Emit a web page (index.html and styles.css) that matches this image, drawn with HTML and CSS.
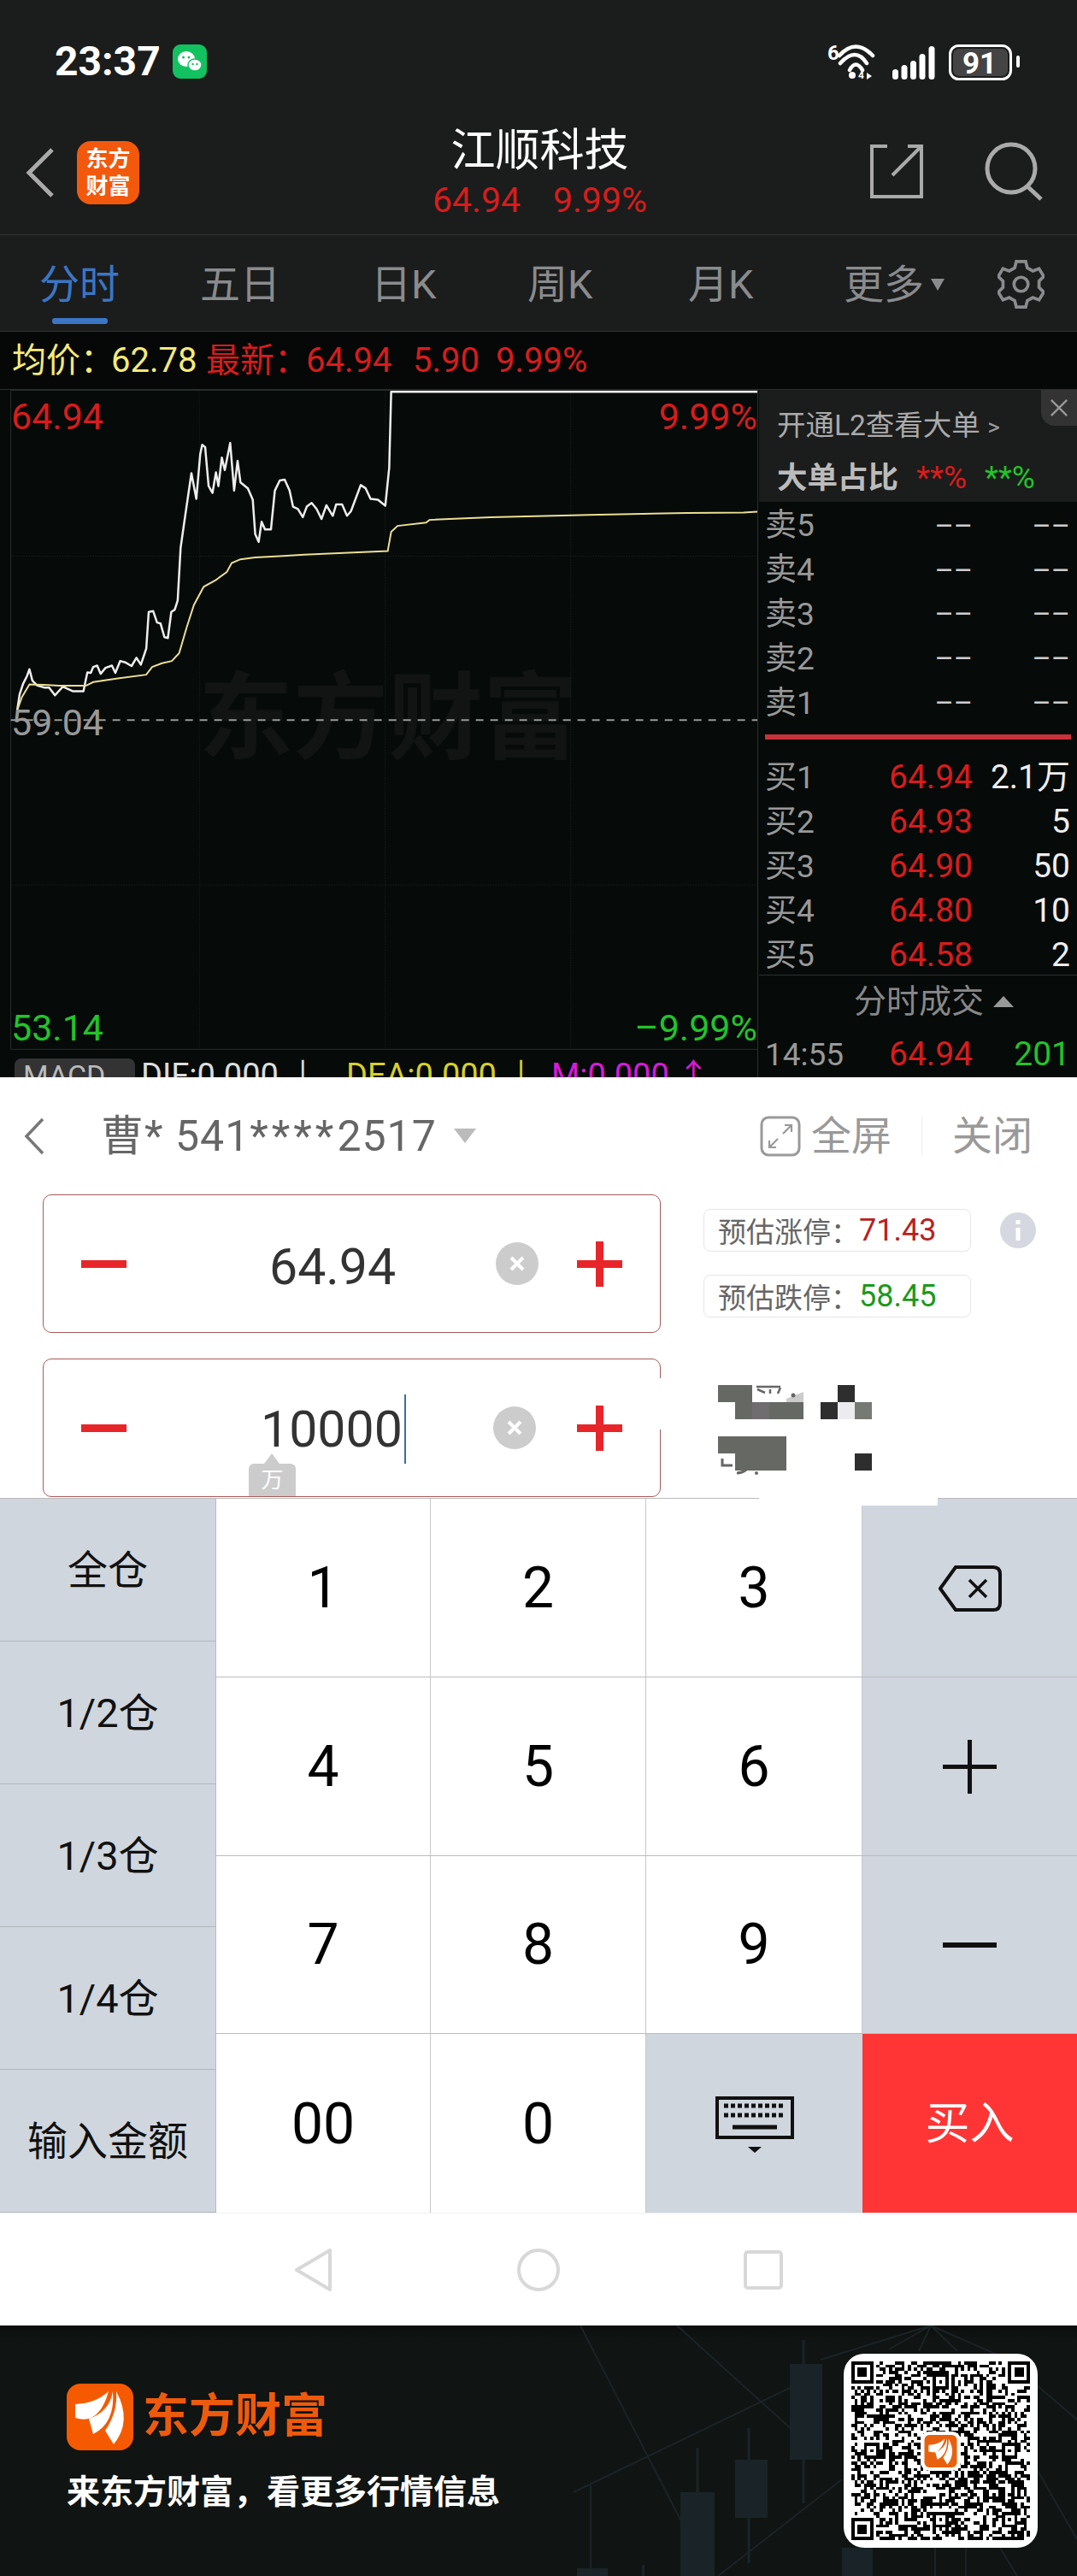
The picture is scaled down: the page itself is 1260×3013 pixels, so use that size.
FILE: index.html
```html
<!DOCTYPE html>
<html lang="zh">
  <head>
    <meta charset="UTF-8">
    <title>江顺科技</title>
    <link rel="stylesheet" href="styles.css">
  </head>
  <body>
    <!-- Status bar and stock title -->
    <header class="top">
      <div class="status">
        <span class="time">23:37</span>
        <svg class="wechat" viewBox="0 0 40 40">
          <rect width="40" height="40" rx="9" fill="#12c15f"/>
          <ellipse cx="16" cy="17" rx="10" ry="9" fill="#fff"/>
          <ellipse cx="26" cy="24" rx="8" ry="7" fill="#fff" stroke="#12c15f" stroke-width="1.5"/>
          <circle cx="12.5" cy="15" r="1.5" fill="#12c15f"/>
          <circle cx="19" cy="15" r="1.5" fill="#12c15f"/>
          <circle cx="23.500" cy="23" r="1.200" fill="#12c15f"/>
          <circle cx="28.500" cy="23" r="1.200" fill="#12c15f"/>
        </svg>
        <div class="status-right">
          <svg class="wifi" viewBox="0 0 56 40" fill="none" stroke="#fff" stroke-width="4.500" stroke-linecap="round">
            <text x="0" y="17" class="wifi-six">6</text>
            <path d="M14 12Q33 -9 53 12M15 21Q33 1 46 21M26 29Q33 16 41 29"/>
            <circle cx="29" cy="35" r="4" fill="#fff" stroke="none"/>
            <text x="36" y="39" class="wifi-four">4</text>
            <path d="M46 32L52 36L46 40Z" fill="#fff" stroke="none"/>
          </svg>
          <svg class="signal" viewBox="0 0 50 39" fill="#fff">
            <rect x="0" y="27" width="7" height="12" rx="3.500"/>
            <rect x="10.500" y="22" width="7" height="17" rx="3.500"/>
            <rect x="21" y="17" width="7" height="22" rx="3.500"/>
            <rect x="31.500" y="9" width="7" height="30" rx="3.500"/>
            <rect x="42.500" y="0" width="7" height="39" rx="3.500"/>
          </svg>
          <svg class="battery" viewBox="0 0 83 42">
            <rect x="1.500" y="1.500" width="71" height="39" rx="10" fill="none" stroke="#fff" stroke-width="3"/>
            <rect x="5" y="5" width="64" height="32" rx="7" fill="#444"/>
            <rect x="79" y="13" width="4" height="14" rx="2" fill="#fff"/>
            <text x="36" y="34" text-anchor="middle" class="battery-text">91</text>
          </svg>
        </div>
      </div>
      <div class="nav">
        <div class="nav-left">
          <svg class="back" viewBox="0 0 33 58" fill="none" stroke="#aaa" stroke-width="5">
            <path d="M31 2L4 29L31 56"/>
          </svg>
          <div class="app-badge">东方<br>财富</div>
        </div>
        <div class="nav-title">
          <div class="stock-name">江顺科技</div>
          <div class="stock-sub"><span>64.94</span><span>9.99%</span></div>
        </div>
        <div class="nav-right">
          <svg class="share" viewBox="0 0 62 63" fill="none" stroke="#aaa" stroke-width="4">
            <path d="M20 2H2V61H60V2H44M26 36L59 3"/>
          </svg>
          <svg class="search" viewBox="0 0 70 70" fill="none" stroke="#aaa" stroke-width="5">
            <circle cx="31" cy="32" r="28"/>
            <path d="M50 53L66 68"/>
          </svg>
        </div>
      </div>
    </header>

    <nav class="tabs">
      <div class="tab active">分时<i class="tab-line"></i></div>
      <div class="tab">五日</div>
      <div class="tab">日K</div>
      <div class="tab">周K</div>
      <div class="tab">月K</div>
      <div class="tab">更多<i class="tab-arrow"></i></div>
      <svg class="gear" viewBox="-2 0 60 62" fill="none" stroke="#8a8b8d" stroke-width="4">
        <path d="M22 2h12l2 8 7 4 8-3 6 10-6 6v8l6 6-6 10-8-3-7 4-2 8H22l-2-8-7-4-8 3-6-10 6-6v-8l-6-6 6-10 8 3 7-4z"/>
        <circle cx="28" cy="31" r="9"/>
      </svg>
    </nav>

    <div class="quote">
      <span class="yellow">均价：</span>
      <span class="yellow">62.78</span>
      <span class="red">最新：</span>
      <span class="red">64.94</span>
      <span class="red">5.90</span>
      <span class="red">9.99%</span>
    </div>

    <!-- Intraday chart and order book -->
    <section class="market">
      <div class="chart">
        <div class="watermark">东方财富</div>
        <svg class="chart-lines" viewBox="0 30 1543 1501" preserveAspectRatio="none" fill="none">
          <g class="grid-lines">
            <path d="M22 31H1543M22 1470H1543M22 31V1470"/>
            <path class="dotted" d="M22 393H1543M22 1111H1543M407 31V1470M785 31V1470M1163 31V1470"/>
          </g>
          <path class="base-line" d="M22 751H1543"/>
          <path class="price-line" d="M35 730 40 695 47 672 55 655 60 640 66 665 75 675 90 680 100 680 112 697 128 678 148 688 170 688 178 647 185 648 190 635 198 632 205 650 215 637 228 632 235 648 245 622 255 625 268 633 278 615 287 630 298 595 303 515 312 513 320 538 327 540 335 570 342 572 349 515 356 510 362 490 368 375 378 300 390 212 400 268 408 170 412 150 418 155 425 240 433 255 440 210 445 240 452 178 458 205 469 146 477 250 484 185 490 232 505 245 515 270 520 345 527 362 533 318 540 335 552 335 560 250 570 228 580 226 590 250 597 285 607 290 617 308 625 285 635 277 645 290 655 312 665 282 678 305 685 280 697 280 707 305 715 295 735 238 745 245 755 268 770 270 785 283 793 200 797 34 1543 34"/>
          <path class="avg-line" d="M35 730 45 700 60 673 90 674 120 676 175 676 190 668 240 660 298 652 310 635 330 627 350 622 365 605 380 550 395 500 415 460 440 445 462 428 472 408 490 400 520 396 570 393 620 390 720 385 790 382 797 340 810 327 868 320 875 314 1000 308 1200 303 1400 299 1515 298 1543 296"/>
        </svg>
        <span class="chart-label red label-top">64.94</span>
        <span class="chart-label red label-top label-right">9.99%</span>
        <span class="chart-label grey label-mid">59.04</span>
        <span class="chart-label green label-low">53.14</span>
        <span class="chart-label green label-low label-right">–9.99%</span>
        <div class="macd">
          <span class="macd-chip">MACD</span>
          <span class="macd-dif">DIF:0.000 ↓</span>
          <span class="macd-dea">DEA:0.000 ↓</span>
          <span class="macd-m">M:0.000 ↑</span>
        </div>
      </div>

      <aside class="book">
        <div class="book-head">
          <div class="book-close">
            <svg viewBox="0 0 24 24" fill="none" stroke="#999" stroke-width="2.500"><path d="M2 2L22 22M22 2L2 22"/></svg>
          </div>
          <div class="book-l2">开通L2查看大单 <span class="book-more">&gt;</span></div>
          <div class="book-ratio"><b>大单占比</b><span class="red">**%</span><span class="green">**%</span></div>
        </div>
        <div class="book-rows">
          <div class="row"><span class="row-label">卖5</span><span class="dash">––</span><span class="dash">––</span></div>
          <div class="row"><span class="row-label">卖4</span><span class="dash">––</span><span class="dash">––</span></div>
          <div class="row"><span class="row-label">卖3</span><span class="dash">––</span><span class="dash">––</span></div>
          <div class="row"><span class="row-label">卖2</span><span class="dash">––</span><span class="dash">––</span></div>
          <div class="row"><span class="row-label">卖1</span><span class="dash">––</span><span class="dash">––</span></div>
        </div>
        <div class="book-sep"></div>
        <div class="book-rows">
          <div class="row"><span class="row-label">买1</span><span class="red">64.94</span><span class="vol">2.1万</span></div>
          <div class="row"><span class="row-label">买2</span><span class="red">64.93</span><span class="vol">5</span></div>
          <div class="row"><span class="row-label">买3</span><span class="red">64.90</span><span class="vol">50</span></div>
          <div class="row"><span class="row-label">买4</span><span class="red">64.80</span><span class="vol">10</span></div>
          <div class="row"><span class="row-label">买5</span><span class="red">64.58</span><span class="vol">2</span></div>
        </div>
        <div class="book-ticks">分时成交<i class="ticks-arrow"></i></div>
        <div class="row tick-row"><span class="row-label">14:55</span><span class="red">64.94</span><span class="green">201</span></div>
      </aside>
    </section>

    <!-- Order panel -->
    <section class="trade">
      <div class="trade-head">
        <svg class="trade-back" viewBox="0 0 24 44" fill="none" stroke="#777" stroke-width="3.500">
          <path d="M22 2L3 22L22 42"/>
        </svg>
        <span class="account">曹* 541<span class="stars">****</span>2517</span>
        <i class="account-arrow"></i>
        <div class="trade-actions">
          <svg class="fullscreen" viewBox="0 0 48 48" fill="none" stroke="#999" stroke-width="3">
            <rect x="2" y="2" width="44" height="44" rx="8"/>
            <path d="M27 21L36 12M29 11H37V19M21 27L12 36M11 29V37H19" stroke-width="2.200"/>
          </svg>
          <span class="action">全屏</span>
          <i class="action-line"></i>
          <span class="action">关闭</span>
        </div>
      </div>

      <div class="form">
        <div class="inputs">
          <div class="stepper">
            <svg class="step-btn" viewBox="0 0 53 53"><rect y="22" width="53" height="9" fill="#e8262a"/></svg>
            <span class="step-value">64.94</span>
            <svg class="clear" viewBox="0 0 50 50">
              <circle cx="25" cy="25" r="25" fill="#ccc"/>
              <path d="M18 18L32 32M32 18L18 32" stroke="#fff" stroke-width="4"/>
            </svg>
            <svg class="step-btn" viewBox="0 0 53 53"><path d="M0 22H53V31H0ZM22 0H31V53H22Z" fill="#e8262a"/></svg>
          </div>
          <div class="stepper stepper-qty">
            <svg class="step-btn" viewBox="0 0 53 53"><rect y="22" width="53" height="9" fill="#e8262a"/></svg>
            <span class="step-value">10000<i class="cursor"></i></span>
            <svg class="clear" viewBox="0 0 50 50">
              <circle cx="25" cy="25" r="25" fill="#ccc"/>
              <path d="M18 18L32 32M32 18L18 32" stroke="#fff" stroke-width="4"/>
            </svg>
            <svg class="step-btn" viewBox="0 0 53 53"><path d="M0 22H53V31H0ZM22 0H31V53H22Z" fill="#e8262a"/></svg>
            <span class="unit-tag">万</span>
          </div>
        </div>
        <div class="limits">
          <div class="limit-row">
            <div class="chip">预估涨停：<span class="chip-up">71.43</span></div>
            <svg class="info" viewBox="0 0 42 42">
              <circle cx="21" cy="21" r="21" fill="#d5d8e0"/>
              <path d="M18.500 18H23.500V33H18.500ZM18.500 9H23.500V14H18.500Z" fill="#fff"/>
            </svg>
          </div>
          <div class="chip">预估跌停：<span class="chip-down">58.45</span></div>
          <!-- pixelated part of the screenshot -->
          <div class="mosaic">
            <i class="px-a"></i><i class="px-b"></i><i class="px-c"></i><i class="px-d"></i>
            <i class="px-e"></i><i class="px-f"></i><i class="px-g"></i><i class="px-h"></i>
            <i class="px-i"></i><i class="px-j"></i><i class="px-k"></i>
            <svg class="px-top" viewBox="0 0 60 20" fill="none" stroke="#666" stroke-width="2.500">
              <path d="M5 2H33M6 5L15 9M21 5V10M33 3L30 10"/>
              <path d="M40 16L60 8V20H40Z" fill="#ccc" stroke="none"/>
              <circle cx="48" cy="12" r="2.500" fill="#666" stroke="none"/>
            </svg>
            <svg class="px-low" viewBox="0 0 60 40" fill="none" stroke="#666" stroke-width="3">
              <path d="M5 6V14H17M36 12Q35 22 22 23"/>
              <circle cx="45" cy="23" r="2" fill="#666" stroke="none"/>
            </svg>
          </div>
        </div>
      </div>

      <div class="keyboard">
        <div class="kb-patch"></div>
        <div class="kb-side">
          <div class="kb-side-key">全仓</div>
          <div class="kb-side-key">1/2仓</div>
          <div class="kb-side-key">1/3仓</div>
          <div class="kb-side-key">1/4仓</div>
          <div class="kb-side-key">输入金额</div>
        </div>
        <div class="kb-main">
          <div class="key">1</div>
          <div class="key">2</div>
          <div class="key">3</div>
          <div class="key key-grey">
            <svg class="kb-del" viewBox="0 0 74 54" fill="none" stroke="#111" stroke-width="4">
              <path d="M20 2H64Q72 2 72 10V44Q72 52 64 52H20L2 27Z"/>
              <path d="M36 17L56 37M56 17L36 37" stroke-width="3.500"/>
            </svg>
          </div>
          <div class="key">4</div>
          <div class="key">5</div>
          <div class="key">6</div>
          <div class="key key-grey">
            <svg class="kb-sign" viewBox="0 0 63 63"><path d="M0 29H63V34H0ZM29 0H34V63H29Z" fill="#111"/></svg>
          </div>
          <div class="key">7</div>
          <div class="key">8</div>
          <div class="key">9</div>
          <div class="key key-grey">
            <svg class="kb-sign" viewBox="0 0 63 63"><rect y="28" width="63" height="6" fill="#111"/></svg>
          </div>
          <div class="key key-end">00</div>
          <div class="key key-end">0</div>
          <div class="key key-grey key-end">
            <svg class="kb-board" viewBox="0 0 92 66">
              <rect x="2" y="2" width="88" height="46" fill="none" stroke="#111" stroke-width="4"/>
              <path d="M10 11h72M10 22h72" stroke="#111" stroke-width="5" stroke-dasharray="5 3"/>
              <path d="M20 36H72" stroke="#111" stroke-width="5"/>
              <path d="M38 59H54L46 66Z" fill="#111"/>
            </svg>
          </div>
          <div class="key key-buy key-end">买入</div>
        </div>
      </div>
    </section>

    <!-- Android buttons -->
    <div class="sysbar">
      <svg class="sys-back" viewBox="0 0 43 50" fill="none" stroke="#d8d8d8" stroke-width="4">
        <path d="M41 2V48L2 25Z" stroke-linejoin="round"/>
      </svg>
      <svg class="sys-home" viewBox="0 0 50 50" fill="none" stroke="#d8d8d8" stroke-width="4">
        <circle cx="25" cy="25" r="23"/>
      </svg>
      <svg class="sys-recent" viewBox="0 0 46 46" fill="none" stroke="#d8d8d8" stroke-width="4">
        <rect x="2" y="2" width="42" height="42" rx="3"/>
      </svg>
    </div>

    <!-- Share footer -->
    <footer class="footer">
      <svg class="footer-bg" viewBox="0 0 1260 293" fill="none">
        <g stroke="#1c2326" stroke-width="2">
          <path d="M679 0L830 293M792 0L930 125M924 73L671 195M1089 0L960 40M1089 0L1040 28M1089 0L1075 30M1089 0L1120 30M1089 0L1180 40M1214 170L1260 250M985 180L840 293M1213 70L1260 110M1094 260V293M1130 260V293M1170 260L1190 293"/>
        </g>
        <g fill="#1a2428">
          <path d="M938.500 17H941.500V208H938.500ZM924 45H962V157H924Z"/>
          <path d="M874.500 120H877.500V278H874.500ZM860 157H898V225H860Z"/>
          <path d="M814.500 143H817.500V293H814.500ZM796 195H836V293H796Z"/>
          <path d="M985 260H1021V293H985Z"/>
          <path d="M690 187H692V293H690ZM675 284H711V293H675ZM751 280H754V293H751Z"/>
        </g>
      </svg>
      <div class="footer-left">
        <div class="brand">
          <svg class="brand-logo" viewBox="0 0 78 78">
            <rect width="78" height="78" rx="16" fill="#f55a00"/>
            <path d="M49 9Q34 23 10 24L10 40Q38 49 49 9Z" fill="#fff"/>
            <path d="M54 9Q50 33 26 41L31 59Q57 46 54 9Z" fill="#fff"/>
            <path d="M58 9Q60 33 45 55L55 71Q77 44 58 9Z" fill="#fff"/>
          </svg>
          <span class="brand-name">东方财富</span>
        </div>
        <div class="slogan">来东方财富，看更多行情信息</div>
      </div>
      <div class="qr">
        <svg id="qrCode" class="qr-code" viewBox="0 0 57 57" shape-rendering="crispEdges">
          <path id="qrPath" fill="#000"></path>
        </svg>
        <div class="qr-logo">
          <svg viewBox="0 0 78 78">
            <rect width="78" height="78" rx="12" fill="#e8610f"/>
            <path d="M49 9Q34 23 10 24L10 40Q38 49 49 9Z" fill="#fff"/>
            <path d="M54 9Q50 33 26 41L31 59Q57 46 54 9Z" fill="#fff"/>
            <path d="M58 9Q60 33 45 55L55 71Q77 44 58 9Z" fill="#fff"/>
          </svg>
        </div>
      </div>
    </footer>
    <script src="script.js"></script>
  </body>
</html>
```
FILE: styles.css
```css
* {
  box-sizing: border-box;
}

body {
  margin: 0;
  width: 1260px;
  height: 3013px;
  overflow: hidden;
  background-color: #fff;
  font-family: Roboto, "Noto Sans CJK SC", sans-serif;
  color: #111;
}

i {
  display: block;
  font-style: normal;
}

.red {
  color: #d81c1c;
}

.green {
  color: #22c32a;
}

.yellow {
  color: #f5ea7a;
}

.grey {
  color: #999;
}

/* Top bar */
.top {
  height: 275px;
  background-color: #1b1c1c;
  border-bottom: 1px solid #333;
}

.status {
  height: 130px;
  padding: 52px 67px 0 64px;
  display: flex;
  align-items: flex-start;
}

.time {
  font-size: 48px;
  font-weight: 700;
  line-height: 40px;
  color: #fff;
}

.wechat {
  width: 40px;
  height: 40px;
  margin-left: 14px;
}

.status-right {
  margin-left: auto;
  display: flex;
  align-items: center;
  gap: 20px;
}

.wifi {
  width: 56px;
  height: 40px;
  overflow: visible;
}

.wifi-six {
  font-size: 24px;
  font-weight: 700;
  fill: #fff;
  stroke: none;
}

.wifi-four {
  font-size: 12px;
  font-weight: 700;
  fill: #fff;
  stroke: none;
}

.signal {
  width: 50px;
  height: 39px;
}

.battery {
  width: 83px;
  height: 42px;
  margin-left: -4px;
}

.battery-text {
  font-size: 35px;
  font-weight: 700;
  fill: #fff;
}

.nav {
  height: 144px;
  padding: 0 38px;
  display: grid;
  grid-template-columns: 1fr auto 1fr;
}

.nav-left {
  display: flex;
  align-items: center;
  gap: 27px;
  margin-left: -8px;
  padding-bottom: 1px;
}

.back {
  width: 33px;
  height: 58px;
}

.app-badge {
  width: 73px;
  height: 74px;
  border-radius: 16px;
  background-color: #f2590d;
  color: #fff;
  font-size: 26px;
  font-weight: 700;
  line-height: 32px;
  text-align: center;
  padding-top: 5px;
}

.nav-title {
  margin-left: 3px;
}

.stock-name {
  margin-top: 20px;
  font-size: 52px;
  line-height: 54px;
  color: #fff;
  text-align: center;
}

.stock-sub {
  margin-top: 7px;
  font-size: 41px;
  line-height: 46px;
  color: #d81c1c;
  display: flex;
  gap: 38px;
  justify-content: center;
}

.nav-right {
  display: flex;
  align-items: center;
  justify-content: flex-end;
  gap: 72px;
  padding-bottom: 4px;
}

.share {
  width: 62px;
  height: 63px;
}

.search {
  width: 70px;
  height: 70px;
}

/* Period tabs */
.tabs {
  height: 113px;
  background-color: #1b1c1c;
  border-bottom: 1px solid #333;
  padding: 32px 38px 0 46px;
  display: grid;
  grid-template-columns: 188px 200px 183px 188px 182px 1fr auto;
  align-items: start;
  position: relative;
}

.tab {
  font-size: 47px;
  line-height: 52px;
  color: #8a8b8d;
  display: flex;
  align-items: center;
}

.tab.active {
  color: #3a76c4;
}

.tab-line {
  position: absolute;
  left: 61px;
  top: 97px;
  width: 65px;
  height: 7px;
  border-radius: 3px;
  background-color: #3a76c4;
}

.tab-arrow {
  margin-left: 8px;
  width: 0;
  height: 0;
  border-left: 8px solid transparent;
  border-right: 8px solid transparent;
  border-top: 14px solid #8a8b8d;
}

.gear {
  width: 55px;
  height: 57px;
  margin-top: -3px;
}

/* Quote line */
.quote {
  height: 68px;
  padding-left: 14px;
  background-color: #060807;
  display: grid;
  grid-template-columns: 116px 111px 117px 125px 97px auto;
  align-items: center;
  font-size: 40px;
  line-height: 1;
  justify-content: start;
  white-space: nowrap;
  border-bottom: 1px solid #2a2e2d;
}

/* Chart and order book */
.market {
  height: 804px;
  display: flex;
  background-color: #060a08;
  overflow: hidden;
}

.chart {
  width: 886px;
  height: 804px;
  position: relative;
}

.chart-lines {
  position: relative;
  display: block;
  width: 886px;
  height: 804px;
}

.chart-lines path {
  vector-effect: non-scaling-stroke;
}

.grid-lines {
  stroke: #2a2e2d;
  stroke-width: 1;
}

.dotted {
  stroke: #252a28;
  stroke-dasharray: 1 2;
}

.base-line {
  stroke: #999;
  stroke-width: 2;
  stroke-dasharray: 9 8;
}

.price-line {
  stroke: #eee;
  stroke-width: 2.5;
  stroke-linejoin: round;
}

.avg-line {
  stroke: #ecdf94;
  stroke-width: 2;
}

.watermark {
  position: absolute;
  left: 232px;
  top: 320px;
  font-size: 111px;
  line-height: 130px;
  font-weight: 700;
  color: #111413;
}

.chart-label {
  position: absolute;
  left: 13px;
  font-size: 43px;
  line-height: 44px;
}

.label-right {
  left: auto;
  right: 0;
}

.label-top {
  top: 9px;
}

.label-mid {
  top: 367px;
}

.label-low {
  top: 724px;
}

.macd {
  position: absolute;
  left: 17px;
  right: 0;
  top: 782px;
  height: 22px;
  overflow: hidden;
  display: flex;
  font-size: 38px;
  line-height: 40px;
}

.macd-chip {
  width: 141px;
  height: 40px;
  background-color: #333;
  color: #bbb;
  border-radius: 8px;
  padding-left: 10px;
  font-size: 34px;
}

.macd-dif {
  margin-left: 7px;
  width: 240px;
  color: #ddd;
}

.macd-dea {
  width: 240px;
  color: #d8cf2a;
}

.macd-m {
  color: #d81ad8;
}

.book {
  width: 374px;
  padding-left: 1px;
  font-size: 39px;
  border-left: 1px solid #2a2e2d;
}

.book-head {
  height: 131px;
  background-color: #1b1c1c;
  padding: 20px 0 0 21px;
  position: relative;
  color: #aaa;
}

.book-close {
  position: absolute;
  right: 0;
  top: 0;
  width: 42px;
  height: 42px;
  background-color: #333;
  border-bottom-left-radius: 16px;
  display: flex;
  align-items: center;
  justify-content: center;
}

.book-close svg {
  width: 24px;
  height: 22px;
}

.book-l2 {
  font-size: 33.500px;
  line-height: 44px;
  white-space: nowrap;
}

.book-more {
  font-size: 28px;
  color: #999;
}

.book-ratio {
  margin-top: 15px;
  display: flex;
  align-items: center;
  font-size: 37px;
  line-height: 44px;
  gap: 21px;
}

.book-ratio b {
  font-size: 35.500px;
  color: #bbb;
}

.book-rows {
  padding-top: 1px;
  padding-bottom: 1px;
}

.book-rows .row:first-child {
  margin-top: 1px;
}

.row {
  height: 51.800px;
  padding: 0 7px;
  display: grid;
  grid-template-columns: 126px 117px 114px;
  align-items: center;
  line-height: 1;
}

.row span:not(:first-child) {
  text-align: right;
}

.row-label {
  font-size: 37px;
  color: #999;
  white-space: nowrap;
}

.dash {
  font-size: 34px;
  color: #ccc;
}

.vol {
  color: #eee;
}

.book-sep {
  height: 6px;
  margin: 10px 7px 17px 7px;
  background-color: #c8323a;
}

.book-ticks {
  height: 62px;
  margin-top: -4px;
  border-top: 1px solid #2a2e2d;
  font-size: 38px;
  line-height: 1;
  color: #888;
  display: flex;
  align-items: center;
  padding-left: 111px;
  gap: 11px;
}

.ticks-arrow {
  width: 0;
  height: 0;
  border-left: 12px solid transparent;
  border-right: 12px solid transparent;
  border-bottom: 13px solid #999;
}

.tick-row {
  margin-top: 6px;
}

/* Order panel */
.trade {
  background-color: #fff;
}

.trade-head {
  height: 137px;
  padding: 0 52px 0 28px;
  display: flex;
  align-items: center;
}

.trade-back {
  width: 24px;
  height: 44px;
  margin-right: 66px;
}

.account {
  font-size: 50px;
  letter-spacing: 1px;
  color: #666;
  line-height: 1;
}

.stars {
  letter-spacing: 4px;
}

.account-arrow {
  width: 0;
  height: 0;
  margin-left: 20px;
  border-left: 13px solid transparent;
  border-right: 13px solid transparent;
  border-top: 17px solid #bbb;
}

.trade-actions {
  margin-left: auto;
  display: flex;
  align-items: center;
}

.fullscreen {
  width: 48px;
  height: 48px;
  margin-right: 12px;
}

.action {
  font-size: 47px;
  line-height: 1;
  color: #999;
}

.action-line {
  width: 1px;
  height: 46px;
  margin: 0 35px;
  background-color: #eee;
}

.form {
  height: 355px;
  padding-left: 50px;
  display: flex;
}

.inputs {
  width: 723px;
  display: flex;
  flex-direction: column;
  gap: 30px;
}

.stepper {
  height: 162px;
  border: 1px solid #a85a5a;
  border-radius: 10px;
  padding: 0 44px;
  display: flex;
  align-items: center;
  position: relative;
}

.stepper-qty::after {
  content: "";
  position: absolute;
  right: -2px;
  top: 22px;
  width: 4px;
  height: 60px;
  background-color: #fff;
}

.step-btn {
  width: 53px;
  height: 53px;
  flex: none;
}

.step-value {
  flex: 1;
  padding-left: 167px;
  font-size: 59px;
  line-height: 1;
  color: #333;
  display: flex;
  align-items: center;
  padding-top: 6px;
}

.stepper-qty .step-value {
  padding-left: 157px;
  padding-top: 2px;
}

.cursor {
  width: 2px;
  height: 81px;
  margin-left: 2px;
  background-color: #3a6f9a;
}

.clear {
  width: 50px;
  height: 50px;
  margin-right: 45px;
  flex: none;
}

.stepper-qty .clear {
  margin-right: 48px;
}

.unit-tag {
  position: absolute;
  left: 240px;
  bottom: 0;
  width: 55px;
  height: 38px;
  background-color: #ccc;
  border-radius: 6px 6px 0 0;
  color: #fff;
  font-size: 26px;
  line-height: 38px;
  text-align: center;
}

.unit-tag::before {
  content: "";
  position: absolute;
  left: 18px;
  top: -12px;
  border-left: 9px solid transparent;
  border-right: 9px solid transparent;
  border-bottom: 12px solid #ccc;
}

.limits {
  margin-left: 50px;
  padding-top: 17px;
  display: flex;
  flex-direction: column;
  gap: 27px;
  align-items: flex-start;
}

.limit-row {
  display: flex;
  align-items: center;
  gap: 34px;
}

.chip {
  width: 313px;
  height: 50px;
  border: 1px solid #e6e6e6;
  border-radius: 8px;
  padding-left: 16px;
  display: flex;
  align-items: center;
  font-size: 33px;
  color: #666;
  white-space: nowrap;
}

.chip-up,
.chip-down {
  font-size: 36px;
}

.chip-up {
  color: #b82020;
}

.chip-down {
  color: #1a9a1a;
}

.info {
  width: 42px;
  height: 42px;
}

.mosaic {
  margin: 52px 0 0 17px;
  display: grid;
  grid-template-columns: repeat(10, 20px);
  grid-template-rows: repeat(6, 20px);
}

.px-a { grid-area: 1 / 1 / 2 / 3; background-color: #666864; }
.px-b { grid-area: 2 / 2 / 3 / 3; background-color: #666864; }
.px-c { grid-area: 2 / 3 / 3 / 4; background-color: #6f6d70; }
.px-d { grid-area: 2 / 4 / 3 / 6; background-color: #666864; }
.px-e { grid-area: 1 / 8 / 2 / 9; background-color: #2e2e2e; }
.px-f { grid-area: 2 / 7 / 3 / 8; background-color: #2e2e2e; }
.px-g { grid-area: 2 / 8 / 3 / 9; background-color: #ecebee; }
.px-h { grid-area: 2 / 9 / 3 / 10; background-color: #777975; }
.px-i { grid-area: 4 / 1 / 5 / 5; background-color: #666864; }
.px-j { grid-area: 5 / 2 / 6 / 5; background-color: #666864; }
.px-k { grid-area: 5 / 9 / 6 / 10; background-color: #2e2e2e; }
.px-top { grid-area: 1 / 3 / 2 / 6; width: 60px; height: 20px; }
.px-low { grid-area: 5 / 1 / 7 / 4; width: 60px; height: 40px; }

/* Keypad */
.keyboard {
  height: 836px;
  display: flex;
  border-top: 1px solid #bbb;
  position: relative;
}

.kb-patch {
  position: absolute;
  left: 888px;
  top: -8px;
  width: 209px;
  height: 16px;
  background-color: #fff;
}

.kb-side {
  width: 253px;
  display: grid;
  grid-template-rows: repeat(5, 1fr);
}

.kb-side-key {
  background-color: #cfd6de;
  border-bottom: 1px solid #b4b8bd;
  border-right: 1px solid #bbb;
  display: flex;
  align-items: center;
  justify-content: center;
  font-size: 47px;
  line-height: 1;
  color: #111;
}

.kb-main {
  width: 1007px;
  display: grid;
  grid-template-columns: 251px 252px 253px 251px;
  grid-template-rows: repeat(4, 1fr);
}

.key {
  display: flex;
  align-items: center;
  justify-content: center;
  padding-top: 2px;
  font-size: 66px;
  line-height: 1;
  color: #000;
  border-right: 1px solid #c8c8c8;
  border-bottom: 1px solid #bbb;
}

.key-grey {
  background-color: #cfd6de;
  border-right: none;
}

.key-end {
  border-bottom: none;
}

.key-buy {
  background-color: #ff3535;
  border-right: none;
  color: #fff;
  font-size: 52px;
}

.kb-del {
  width: 74px;
  height: 54px;
}

.kb-sign {
  width: 63px;
  height: 63px;
}

.kb-board {
  width: 92px;
  height: 66px;
}

/* System buttons */
.sysbar {
  height: 132px;
  background-color: #fff;
  border-top: 1px solid #f0f0f0;
  display: flex;
  align-items: center;
  padding-left: 345px;
}

.sys-back {
  width: 43px;
  height: 50px;
}

.sys-home {
  width: 50px;
  height: 50px;
  margin-left: 217px;
}

.sys-recent {
  width: 46px;
  height: 46px;
  margin-left: 215px;
}

/* Footer */
.footer {
  height: 293px;
  background: linear-gradient(#0b0e0c, #101412 16px);
  position: relative;
  display: flex;
  justify-content: space-between;
  padding: 33px 46px 0 78px;
}

.footer-bg {
  position: absolute;
  left: 0;
  top: 0;
  width: 1260px;
  height: 293px;
}

.footer-left {
  position: relative;
  padding-top: 35px;
}

.brand {
  display: flex;
  align-items: center;
  gap: 11px;
}

.brand-logo {
  width: 78px;
  height: 78px;
}

.brand-name {
  font-size: 54px;
  font-weight: 700;
  line-height: 1;
  color: #ee5a0c;
}

.slogan {
  margin-top: 27px;
  font-size: 39px;
  font-weight: 700;
  line-height: 44px;
  color: #fff;
  white-space: nowrap;
}

.qr {
  position: relative;
  width: 227px;
  height: 227px;
  background-color: #fff;
  border-radius: 24px;
  padding: 9px;
}

.qr-code {
  display: block;
  width: 209px;
  height: 209px;
}

.qr-logo {
  position: absolute;
  left: 90px;
  top: 91px;
  width: 47px;
  height: 46px;
  background-color: #fff;
  border-radius: 10px;
  padding: 4px;
}

.qr-logo svg {
  display: block;
  width: 100%;
  height: 100%;
}
```
FILE: script.js
```js
// Draw the share QR code on the footer
var size = 57;
var d = "";

// Finder and alignment squares, these stay clear of the random modules
var aligns = [[6, 28], [28, 6], [28, 50], [50, 28], [50, 50]];

function isReserved(x, y) {
  if ((x < 8 && y < 8) || (x >= size - 8 && y < 8) || (x < 8 && y >= size - 8)) {
    return true;
  }
  for (var i = 0; i < aligns.length; i++) {
    if (Math.abs(x - aligns[i][0]) < 3 && Math.abs(y - aligns[i][1]) < 3) {
      return true;
    }
  }
  return false;
}

function addFinder(x, y) {
  d += "M" + x + " " + y + "h7v7h-7zM" + (x + 1) + " " + (y + 1) + "v5h5v-5z";
  d += "M" + (x + 2) + " " + (y + 2) + "h3v3h-3z";
}

function addAlign(cx, cy) {
  d += "M" + (cx - 2) + " " + (cy - 2) + "h5v5h-5zM" + (cx - 1) + " " + (cy - 1) + "v3h3v-3z";
  d += "M" + cx + " " + cy + "h1v1h-1z";
}

addFinder(0, 0);
addFinder(size - 7, 0);
addFinder(0, size - 7);
aligns.forEach(function (a) {
  addAlign(a[0], a[1]);
});

// Fill the rest with a fixed pseudo random pattern
var seed = 20517;
for (var y = 0; y < size; y++) {
  for (var x = 0; x < size; x++) {
    seed = (seed * 1103515245 + 12345) % 2147483648;
    if (!isReserved(x, y) && Math.floor(seed / 65536) % 100 < 50) {
      d += "M" + x + " " + y + "h1v1h-1z";
    }
  }
}

var path = document.getElementById("qrPath");
path.setAttribute("fill-rule", "evenodd");
path.setAttribute("d", d);
```
